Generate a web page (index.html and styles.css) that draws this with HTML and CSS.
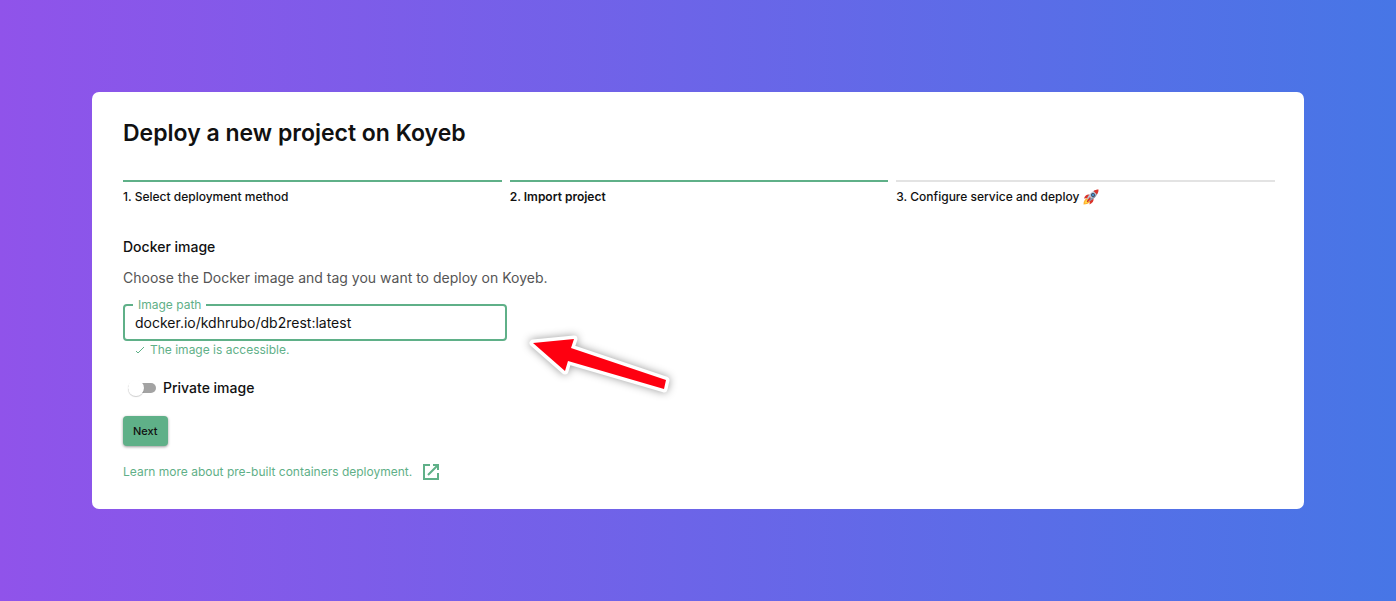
FILE: index.html
```html
<!DOCTYPE html>
<html lang="en">
<head>
  <meta charset="UTF-8">
  <meta name="viewport" content="width=device-width, initial-scale=1">
  <title>Deploy a new project on Koyeb</title>
  <link rel="stylesheet" href="styles.css">
</head>
<body>
  <main class="card">
    <h1>Deploy a new project on Koyeb</h1>

    <ol class="steps">
      <li class="step done">1. Select deployment method</li>
      <li class="step done current">2. Import project</li>
      <li class="step">3. Configure service and deploy <svg class="rocket" viewBox="0 0 32 32" aria-hidden="true">
        <path fill="#ffb02e" d="M9 18c-5 1-8 6-8 13 6 0 12-2 14-7z"/>
        <path fill="#ffe14d" d="M9 21c-3 1-5 4-5 8 4-1 7-2 8-5z"/>
        <path fill="#d9342b" d="M13 11C8 10 4 13 2 19l9-1zM21 19c1 5-2 9-8 12l1-10z"/>
        <path fill="#b9c6d6" d="M30 2C21 2 13 8 8 19l5 5c11-5 17-13 17-22z"/>
        <path fill="#8293a9" d="M28 7C24 14 18 19 10 21l3 3c10-5 15-10 15-17z"/>
        <path fill="#d9342b" d="M31 1c-4 0-7 1-10 3l7 7c2-3 3-6 3-10z"/>
        <circle cx="20" cy="12" r="4" fill="#34465e"/>
        <circle cx="20" cy="12" r="2" fill="#4aa5e8"/>
        <path stroke="#d9342b" stroke-width="3" stroke-linecap="round" d="M14 18l-5 7"/>
      </svg></li>
    </ol>

    <form class="form">
      <h2>Docker image</h2>
      <p class="hint">Choose the Docker image and tag you want to deploy on Koyeb.</p>

      <div class="field">
        <fieldset>
          <legend><label for="image">Image path</label></legend>
          <input type="text" id="image" value="docker.io/kdhrubo/db2rest:latest" spellcheck="false">
        </fieldset>
        <div class="status">
          <svg viewBox="0 0 10 10" aria-hidden="true"><path d="M1 6l2 2 6-6"/></svg>
          The image is accessible.
        </div>
        <svg class="arrow" viewBox="0 0 160 72" aria-hidden="true">
          <path d="M16 18L57 14L54 23L149 55L147 64L51 36L48 46Z"/>
        </svg>
      </div>

      <label class="switch">
        <input type="checkbox">
        Private image
      </label>

      <button type="button" class="next">Next</button>
    </form>

    <a class="learn" href="#">
      Learn more about pre-built containers deployment.
      <svg viewBox="0 0 18 18" aria-hidden="true"><path d="M8 2H2v14h14v-6M11 2h5v5M16 2L6 12"/></svg>
    </a>
  </main>
</body>
</html>
```

FILE: styles.css
```css
* {
  box-sizing: border-box;
}

body {
  margin: 0;
  min-height: 100vh;
  padding: 92px;
  font-family: Inter, sans-serif;
  font-size: 14px;
  line-height: 20px;
  color: #111;
  background: linear-gradient(90deg, #9053ea, #4776e6);
}

.card {
  padding: 25px 29px 27px 31px;
  background: #fff;
  border-radius: 7px;
}

h1 {
  margin: 0;
  font-size: 23px;
  line-height: 32px;
  font-weight: 600;
}

.steps {
  display: flex;
  gap: 8px;
  margin: 31px 0 0;
  padding: 0;
  list-style: none;
}

.step {
  flex: 1;
  padding-top: 5px;
  border-top: 2px solid #e3e3e3;
  font-size: 12px;
  font-weight: 500;
}

.step.done {
  border-color: #5fb088;
}

.step.current {
  font-weight: 600;
}

.rocket {
  width: 16px;
  height: 16px;
  vertical-align: -4px;
}

.form {
  display: flex;
  flex-direction: column;
  align-items: flex-start;
  margin-top: 30px;
}

h2 {
  margin: 0;
  font-size: 14px;
  font-weight: 500;
}

.hint {
  margin: 11px 0 9px;
  color: #555;
}

.field {
  position: relative;
  width: calc(100% / 3);
}

fieldset {
  min-width: 0;
  margin: 0;
  padding: 0 8px 6px;
  border: 2px solid #5fb088;
  border-radius: 4px;
}

legend {
  padding: 0 5px;
  font-size: 12px;
  line-height: 16px;
  color: #5fb088;
}

legend label {
  display: block;
}

.field input {
  display: block;
  width: 100%;
  height: 20px;
  padding: 0 2px;
  border: 0;
  outline: 0;
  font: inherit;
  color: #111;
  background: none;
}

.status {
  display: flex;
  align-items: center;
  gap: 5px;
  padding: 1px 12px 0;
  font-size: 12px;
  line-height: 16px;
  color: #5fb088;
}

.status svg {
  width: 10px;
  height: 10px;
  fill: none;
  stroke: #5fb088;
}

.arrow {
  position: absolute;
  left: calc(100% + 10px);
  top: 28px;
  width: 160px;
  height: 72px;
  fill: #fe0010;
  stroke: #fff;
  stroke-width: 7px;
  stroke-linejoin: round;
  paint-order: stroke;
  filter: drop-shadow(0 0 4px rgba(0, 0, 0, 0.4));
}

.switch {
  display: flex;
  align-items: center;
  gap: 7px;
  margin: 20px 0 18px 5px;
  font-weight: 500;
}

.switch input {
  display: flex;
  align-items: center;
  appearance: none;
  width: 28px;
  height: 10px;
  margin: 0;
  border-radius: 5px;
  background: #a3a3a3;
}

.switch input::before {
  content: "";
  width: 16px;
  height: 16px;
  flex: none;
  border-radius: 50%;
  background: #fff;
  box-shadow: 0 1px 1px rgba(0, 0, 0, 0.2);
}

.switch input:checked {
  justify-content: flex-end;
  background: #5fb088;
}

.next {
  padding: 7px 10px;
  border: 0;
  border-radius: 4px;
  font: 500 11px/16px Inter, sans-serif;
  color: #111;
  background: #5fb088;
  box-shadow: 0 1px 3px rgba(0, 0, 0, 0.4);
  cursor: pointer;
}

.learn {
  display: inline-flex;
  align-items: center;
  gap: 10px;
  margin-top: 16px;
  font-size: 12px;
  color: #5fb088;
  text-decoration: none;
}

.learn svg {
  width: 18px;
  height: 18px;
  fill: none;
  stroke: #5fb088;
  stroke-width: 2px;
}
```
